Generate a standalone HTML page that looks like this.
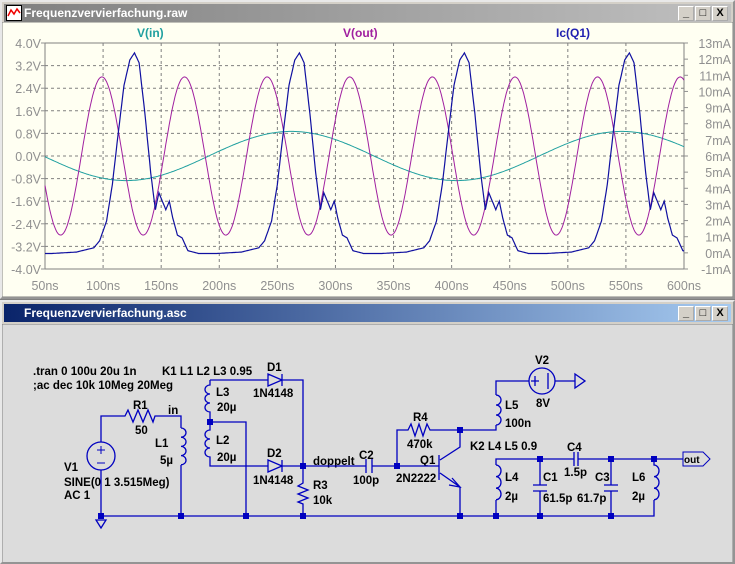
<!DOCTYPE html>
<html><head><meta charset="utf-8"><style>
body{margin:0;width:735px;height:564px;background:#808080;overflow:hidden;font-family:"Liberation Sans",sans-serif}
.win{position:absolute;left:0;width:735px;background:#d4d0c8;box-sizing:border-box;border:2px outset #e8e8e8}
.tb{position:absolute;left:2px;right:2px;height:18px;color:#fff;font-size:12px;line-height:18px;font-weight:bold}
.btns{position:absolute;right:3px;top:2px}
.btns span{display:inline-block;width:14px;height:13px;background:#d4d0c8;border:1px outset #fff;margin-left:1px;color:#000;font-size:11px;line-height:12px;text-align:center;font-weight:bold;vertical-align:top}
svg text{font-family:"Liberation Sans",sans-serif}
</style></head><body>
<div class="win" style="top:0;height:299px">
 <div class="tb" style="top:2px;background:linear-gradient(90deg,#808080,#c0c0c0);padding-left:20px">
  <svg style="position:absolute;left:2px;top:1px" width="16" height="16"><rect x="0.5" y="0.5" width="15" height="15" fill="#fff" stroke="#000"/><path d="M2 11 L5 5 L8 9 L11 4 L14 8" stroke="#e00" fill="none" stroke-width="1.5"/></svg>Frequenzvervierfachung.raw
  <div class="btns"><span>_</span><span>□</span><span>X</span></div>
 </div>
 <svg style="position:absolute;left:0;top:20px" width="731" height="275" viewBox="2 22 731 275">
  <rect x="2" y="22" width="731" height="275" fill="#fffff2" stroke="#808080"/>
  <g id="grid" stroke="#808080" stroke-dasharray="3,3" fill="none"></g>
  <g stroke="#808080" fill="none"><path d="M45 43 H684 M45 269 H684 M45 43 V269 M684 43 V269"/></g>
  <g id="lbl" font-size="12.5" fill="#909090"></g>
  <text x="137" y="37" font-size="12" fill="#20a0a0" font-weight="bold">V(in)</text>
  <text x="343" y="37" font-size="12" fill="#a020a0" font-weight="bold">V(out)</text>
  <text x="556" y="37" font-size="12" fill="#2020b0" font-weight="bold">Ic(Q1)</text>
  <path id="vin" stroke="#20a0a0" fill="none"/>
  <path id="vout" stroke="#a020a0" fill="none"/>
  <path id="ic" stroke="#1010a0" fill="none" stroke-width="1.2"/>
 </svg>
</div>
<div class="win" style="top:300px;height:264px">
 <div class="tb" style="top:2px;background:linear-gradient(90deg,#0a246a,#a6caf0);padding-left:20px">Frequenzvervierfachung.asc
  <div class="btns"><span>_</span><span>□</span><span>X</span></div>
 </div>
 <svg style="position:absolute;left:0;top:22px" width="731" height="238" viewBox="2 324 731 238">
  <rect x="2" y="324" width="731" height="240" fill="#dcdcdc" stroke="#808080"/>
  <g font-size="11.5" font-weight="bold" fill="#000">
   <text x="33" y="375">.tran 0 100u 20u 1n</text>
   <text x="33" y="389">;ac dec 10k 10Meg 20Meg</text>
   <text x="162" y="375">K1 L1 L2 L3 0.95</text>
   <text x="267" y="371">D1</text><text x="253" y="397">1N4148</text>
   <text x="267" y="457">D2</text><text x="253" y="484">1N4148</text>
   <text x="216" y="396">L3</text><text x="217" y="411">20µ</text>
   <text x="216" y="444">L2</text><text x="217" y="461">20µ</text>
   <text x="313" y="465">doppelt</text>
   <text x="359" y="459">C2</text><text x="353" y="484">100p</text>
   <text x="313" y="489">R3</text><text x="313" y="504">10k</text>
   <text x="133" y="409">R1</text><text x="135" y="434">50</text><text x="168" y="414">in</text>
   <text x="155" y="447">L1</text><text x="160" y="464">5µ</text>
   <text x="64" y="471">V1</text><text x="64" y="486">SINE(0 1 3.515Meg)</text><text x="64" y="499">AC 1</text>
   <text x="535" y="364">V2</text><text x="536" y="407">8V</text>
   <text x="505" y="409">L5</text><text x="505" y="427">100n</text>
   <text x="413" y="421">R4</text><text x="407" y="448">470k</text>
   <text x="420" y="464">Q1</text><text x="396" y="482">2N2222</text>
   <text x="470" y="450">K2 L4 L5 0.9</text>
   <text x="505" y="481">L4</text><text x="505" y="500">2µ</text>
   <text x="543" y="481">C1</text><text x="543" y="502">61.5p</text>
   <text x="567" y="451">C4</text><text x="564" y="476">1.5p</text>
   <text x="595" y="481">C3</text><text x="577" y="502">61.7p</text>
   <text x="632" y="481">L6</text><text x="632" y="500">2µ</text>
   <text x="684" y="463" font-size="10">out</text>
  </g>
  <g stroke="#0000c0" fill="none" stroke-width="1.3">
   <path d="M101 516 H654 V500"/>
   <circle cx="101" cy="456" r="14"/>
   <path d="M101 442 V416 H125 l3 -6 l5 12 l5 -12 l5 12 l5 -12 l5 12 l2 -6 H181 V428 M181 465 V516 M101 470 V516"/>
   <path d="M97 450 h8 M101 446 v8 M97 463 h8" stroke-width="1"/>
   <path d="M96 520 h10 l-5 8 z"/>
   <path d="M181 428 a5 4.6 0 0 1 0 9.2 a5 4.6 0 0 1 0 9.2 a5 4.6 0 0 1 0 9.2 a5 4.6 0 0 1 0 9.2"/>
   <path d="M210 380 V385 a5 4.5 0 0 0 0 9 a5 4.5 0 0 0 0 9 a5 4.5 0 0 0 0 9 V422 V430 a5 4.5 0 0 0 0 9 a5 4.5 0 0 0 0 9 a5 4.5 0 0 0 0 9 V466 H268 M282 466 H366 M372 466 H439"/>
   <path d="M210 380 H268 M282 380 H303 V483 l-5 3 l10 4 l-10 4 l10 4 l-10 4 l5 2 V516"/>
   <path d="M268 374 v12 l14 -6 z M282 374 v12 M268 460 v12 l14 -6 z M282 460 v12"/>
   <path d="M210 422 H246 V516"/>
   <path d="M366 459 v14 M372 459 v14"/>
   <path d="M439 455 V480 M440 460 L460 447 V430 M440 473 L460 487 V516 M452 478 l8 9 l-11 -2"/>
   <path d="M397 466 V430 H408 l3 -6 l4 12 l4 -12 l4 12 l4 -12 l3 6 H496 V425 M496 395 V381 H529"/>
   <path d="M496 395 a5 5 0 0 1 0 10 a5 5 0 0 1 0 10 a5 5 0 0 1 0 10"/>
   <circle cx="542" cy="381" r="13"/>
   <path d="M535 376 v10 M531 381 h8 M548 373 v16 M555 381 H575 M575 374 v14 l10 -7 z"/>
   <path d="M496 516 V500 M496 465 V459 H574 M578 459 H683 M574 452 v14 M578 452 v14"/>
   <path d="M496 465 a5 5.8 0 0 1 0 11.6 a5 5.8 0 0 1 0 11.6 a5 5.8 0 0 1 0 11.6"/>
   <path d="M540 459 V485 M533 485 h14 M533 491 h14 M540 491 V516"/>
   <path d="M611 459 V485 M604 485 h14 M604 491 h14 M611 491 V516"/>
   <path d="M654 459 V465 a5 5.8 0 0 1 0 11.6 a5 5.8 0 0 1 0 11.6 a5 5.8 0 0 1 0 11.6"/>
   <path d="M683 452 H703 L710 459 L703 466 H683 Z" stroke-width="1"/>
  </g>
  <g fill="#0000c0">
   <rect x="207" y="419" width="6" height="6"/><rect x="300" y="463" width="6" height="6"/>
   <rect x="98" y="513" width="6" height="6"/><rect x="178" y="513" width="6" height="6"/>
   <rect x="243" y="513" width="6" height="6"/><rect x="300" y="513" width="6" height="6"/>
   <rect x="394" y="463" width="6" height="6"/><rect x="457" y="427" width="6" height="6"/>
   <rect x="457" y="513" width="6" height="6"/><rect x="493" y="513" width="6" height="6"/>
   <rect x="537" y="513" width="6" height="6"/><rect x="608" y="513" width="6" height="6"/>
   <rect x="537" y="456" width="6" height="6"/><rect x="608" y="456" width="6" height="6"/>
   <rect x="651" y="456" width="6" height="6"/>
  </g>
 </svg>
</div>
<script>
var X=t=>45+(t-50)*639/550, Y=v=>43+(4-v)*226/8;
var g='',l='';
for(var i=1;i<11;i++){var x=X(50+i*50);g+='<path d="M'+x+' 43 V269"/>';}
for(var j=1;j<10;j++){var y=43+j*22.6;g+='<path d="M45 '+y+' H684"/>';}
document.getElementById('grid').innerHTML=g;
for(var j=0;j<=10;j++){var v=4-j*0.8,y=43+j*22.6;l+='<text x="41" y="'+(y+5)+'" text-anchor="end">'+(v<0?'-':'')+Math.abs(v).toFixed(1)+'V</text><path d="M41 '+y+' h4" stroke="#909090"/>';}
for(var k=0;k<=14;k++){var y=43+k*226/14;l+='<text x="731" y="'+(y+5)+'" text-anchor="end">'+(13-k)+'mA</text><path d="M684 '+y+' h4" stroke="#909090"/>';}
for(var i=0;i<=11;i++){l+='<text x="'+X(50+i*50)+'" y="290" text-anchor="middle">'+(50+i*50)+'ns</text>';}
document.getElementById('lbl').innerHTML=l;
var a='',b='',c='';
var K=[[-71,-3.45],[-50,-3.4],[-35,-3.25],[-30,-3.0],[-24,-2.3],[-19,-1],[-14,0.8],[-9,2.5],[-4,3.4],[0,3.65],[4,3.3],[9,1.5],[14,-0.6],[18,-1.9],[21,-1.3],[24,-1.6],[27,-1.9],[30,-1.6],[33,-2.2],[37,-2.8],[41,-2.9],[46,-3.35],[55,-3.45],[71,-3.45]];
function ic(t){var d=((t-127)%142+142)%142;if(d>71)d-=142;for(var i=0;i<K.length-1;i++){if(d>=K[i][0]&&d<=K[i+1][0]){var f=(d-K[i][0])/(K[i+1][0]-K[i][0]);return K[i][1]+f*(K[i+1][1]-K[i][1]);}}return -3.45;}
for(var t=50;t<=600;t+=1){var x=X(t).toFixed(1),p=t==50?'M':'L';
a+=p+x+' '+Y(0.87*Math.cos(2*Math.PI*(t-262)/284.5)).toFixed(1);
b+=p+x+' '+Y(2.8*Math.cos(2*Math.PI*(t-99)/71.1)).toFixed(1);
c+=p+x+' '+Y(ic(t)).toFixed(1);}
document.getElementById('vin').setAttribute('d',a);
document.getElementById('vout').setAttribute('d',b);
document.getElementById('ic').setAttribute('d',c);
</script>
</body></html>
